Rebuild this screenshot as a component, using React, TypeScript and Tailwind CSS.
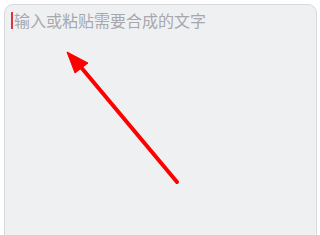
import React from "react";

export default function App() {
  return (
    <div className="w-[320px] h-[235px] bg-white overflow-hidden pt-[4px] pl-[4px] pr-[3px]" style={{ fontFamily: '"Noto Sans CJK SC", "Noto Sans", sans-serif' }}>
      <div className="relative h-[260px] rounded-[9px] border border-[#d9d9dd] bg-[#eff0f2] pl-[6px] pt-[3px]">
        <div className="flex items-center h-[24px]">
          <span className="w-[2px] h-[17px] bg-[#e0303a] mr-[1px]" />
          <span className="text-[16px] leading-[24px] text-[#a7a8ad] tracking-[0px]">输入或粘贴需要合成的文字</span>
        </div>
        <svg className="absolute left-[-5px] top-[-5px]" width="320" height="235" viewBox="0 0 320 235">
          <line x1="177" y1="182" x2="80" y2="66" stroke="#ff0000" strokeWidth="4" strokeLinecap="round" />
          <polygon points="67,52 75,73 88,63" fill="#ff0000" stroke="#ff0000" strokeWidth="1" strokeLinejoin="round" />
        </svg>
      </div>
    </div>
  );
}
